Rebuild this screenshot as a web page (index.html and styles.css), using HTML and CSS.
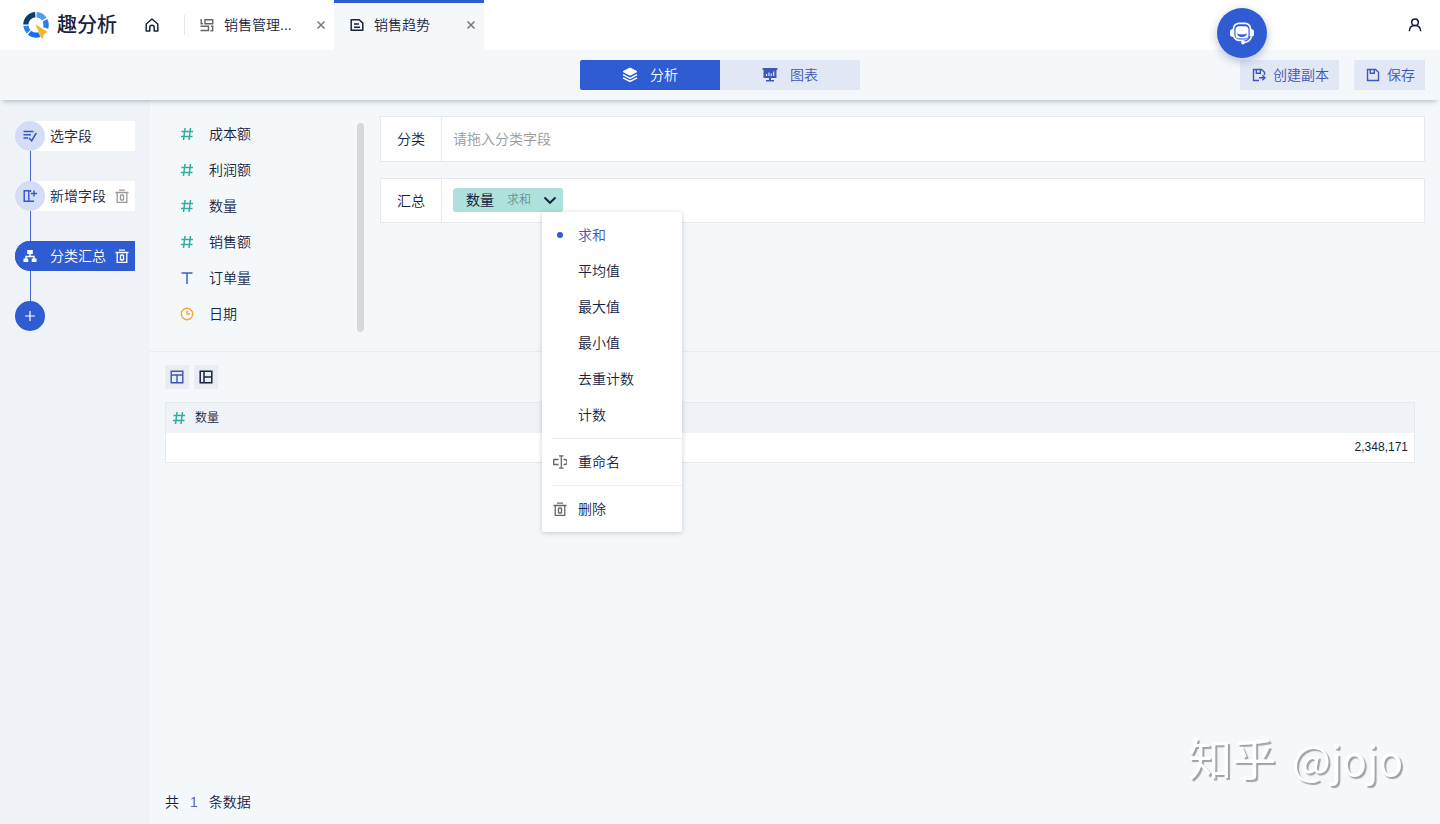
FILE: index.html
```html
<!DOCTYPE html>
<html lang="zh-CN">
<head>
<meta charset="utf-8">
<meta name="viewport" content="width=device-width, initial-scale=1">
<title>趣分析 - 销售趋势</title>
<link rel="stylesheet" href="styles.css">
</head>
<body>
<svg class="sprite" aria-hidden="true">
  <symbol id="i-hash" viewBox="0 0 14 14"><path d="M5 1 3.500 13M10.500 1 9 13M1.500 4.500h11.500M1 9.500h11.500" fill="none" stroke="currentColor" stroke-width="1.500"/></symbol>
  <symbol id="i-trash" viewBox="0 0 14 14"><path d="M.5 3.500h13M4 1.200h6M2.200 3.500v9.800h9.600V3.500M5.500 6v5M8.500 6v5M5.500 6h3M5.500 11h3" fill="none" stroke="currentColor" stroke-width="1.300"/></symbol>
  <symbol id="i-close" viewBox="0 0 10 10"><path d="m1.500 1.500 7 7M8.500 1.500l-7 7" fill="none" stroke="currentColor" stroke-width="1.500"/></symbol>
</svg>

<header class="header">
  <a class="brand" href="#">
    <svg class="brand-logo" viewBox="0 0 28 28" aria-hidden="true">
      <g fill="none" stroke-width="5.200">
        <path d="M3.800 13.500A10.200 10.200 0 0 1 13.300 3.600" stroke="#0c3f66"/>
        <path d="M14.600 3.600A10.200 10.200 0 0 1 22.400 8" stroke="#4f9bf5"/>
        <path d="M23 9.200A10.200 10.200 0 0 1 23.700 17" stroke="#2d7df0"/>
        <path d="M3.900 14.800A10.200 10.200 0 0 0 6.700 20.800" stroke="#2f80ee"/>
        <path d="M7.500 21.700A10.200 10.200 0 0 0 18 23.300" stroke="#146ff5"/>
      </g>
      <path d="m13 12.800 13 8.200-3.800 2.200-1.200 4.600h-1.500z" fill="#fbb321" stroke="#fff" stroke-width=".5"/>
    </svg>
    <span class="brand-name">趣分析</span>
  </a>
  <a class="home" href="#" aria-label="首页">
    <svg class="icon" viewBox="0 0 14 14" aria-hidden="true"><path d="M1.200 6 7 1l5.800 5v7H9.200V9.500a2.200 2.200 0 0 0-4.400 0V13H1.200z" fill="none" stroke="currentColor" stroke-width="1.500" stroke-linejoin="round"/></svg>
  </a>
  <nav class="tabs" aria-label="页签">
    <div class="tab">
      <a class="tab-link" href="#">
        <svg class="icon icon-muted" viewBox="0 0 14 14" aria-hidden="true"><path d="M1.200 1v4.700M.5 5.700h2.500M5 1.700h7.700v4H5zM.5 8.300h8v4.200h-8M11 8.300h1.700v5M10.500 12.700h2.200" fill="none" stroke="currentColor" stroke-width="1.400"/></svg>
        <span class="tab-text">销售管理...</span>
      </a>
      <button class="tab-close" type="button" aria-label="关闭销售管理"><svg viewBox="0 0 10 10"><use href="#i-close"/></svg></button>
    </div>
    <div class="tab tab-active">
      <a class="tab-link" href="#" aria-current="page">
        <svg class="icon" viewBox="0 0 14 14" aria-hidden="true"><path d="M1.200 1.700h8l3.600 3.400v7.200H1.200zM4 6h5M4 9.300h6" fill="none" stroke="currentColor" stroke-width="1.500" stroke-linejoin="round"/></svg>
        <span class="tab-text">销售趋势</span>
      </a>
      <button class="tab-close" type="button" aria-label="关闭销售趋势"><svg viewBox="0 0 10 10"><use href="#i-close"/></svg></button>
    </div>
  </nav>
  <button class="user" type="button" aria-label="用户">
    <svg class="icon" viewBox="0 0 14 14" aria-hidden="true"><g fill="none" stroke="currentColor" stroke-width="1.500"><circle cx="7" cy="4.300" r="3.300"/><path d="M1.300 13.300C1.500 9.500 4 7.600 7 7.600s5.500 1.900 5.700 5.700"/></g></svg>
  </button>
</header>

<div class="toolbar">
  <div class="modes">
    <button class="mode mode-active" type="button">
      <svg class="mode-icon" viewBox="0 0 16 16" aria-hidden="true"><path d="m8 1 7 3.600L8 8.200 1 4.600z" fill="currentColor" stroke="currentColor" stroke-linejoin="round"/><path d="m1 7.700 7 3.600 7-3.600M1 10.800l7 3.700 7-3.700" fill="none" stroke="currentColor" stroke-width="1.500"/></svg>
      <span>分析</span>
    </button>
    <button class="mode" type="button">
      <svg class="mode-icon" viewBox="0 0 16 16" aria-hidden="true"><path d="M.5 1h15v1.800h-1V11H9v2h3v1.500H4V13h3v-2H1.500V2.800h-1z" fill="currentColor"/><path d="M4.500 9V7M7 9V5.500M9.300 9V6.500M11.700 9V4.500" stroke="#e2e7f5" stroke-width="1.200"/></svg>
      <span>图表</span>
    </button>
  </div>
  <div class="actions">
    <button class="action" type="button">
      <svg class="icon" viewBox="0 0 14 14" aria-hidden="true"><path d="M7 12.500H1.500v-11h8l3 2.800V7M4.300 1.500v3.700h4V1.500M7 9.800h5.500M10.300 7.300l2.700 2.500-2.700 2.500" fill="none" stroke="currentColor" stroke-width="1.400"/></svg>
      <span>创建副本</span>
    </button>
    <button class="action" type="button">
      <svg class="icon" viewBox="0 0 14 14" aria-hidden="true"><path d="M1.500 1.500h8l3 2.800v8.200h-11zM4.300 1.500v3.700h4V1.500" fill="none" stroke="currentColor" stroke-width="1.400"/></svg>
      <span>保存</span>
    </button>
  </div>
</div>

<div class="workspace">
  <aside class="sidebar">
    <ol class="steps">
      <li class="step">
        <button class="step-main" type="button">
          <span class="step-badge"><svg class="icon" viewBox="0 0 14 14" aria-hidden="true"><path d="M.5 2.500h10M.5 5.700h7.500M.5 9h4.500M6 9l2.700 2.700L13.300 4" fill="none" stroke="currentColor" stroke-width="1.500"/></svg></span>
          <span>选字段</span>
        </button>
      </li>
      <li class="step">
        <button class="step-main" type="button">
          <span class="step-badge"><svg class="icon" viewBox="0 0 14 14" aria-hidden="true"><path d="M1.200 1.700h4.600v10.600H1.200zM5.800 12.300h5.200M7.500 1v2M8 4.500h6M11 1.500v6" fill="none" stroke="currentColor" stroke-width="1.400"/></svg></span>
          <span>新增字段</span>
        </button>
        <button class="step-delete" type="button" aria-label="删除新增字段"><svg class="icon" viewBox="0 0 14 14"><use href="#i-trash"/></svg></button>
      </li>
      <li class="step step-active">
        <button class="step-main" type="button" aria-current="step">
          <span class="step-badge"><svg class="icon" viewBox="0 0 14 14" aria-hidden="true"><path d="M4.200 1h5.600v4H4.200zM.5 9.500h4.800V13H.5zM8.700 9.500h4.800V13H8.700z" fill="currentColor"/><path d="M7 5v2.500M3 10V7.500h8V10" fill="none" stroke="currentColor" stroke-width="1.400"/></svg></span>
          <span>分类汇总</span>
        </button>
        <button class="step-delete" type="button" aria-label="删除分类汇总"><svg class="icon" viewBox="0 0 14 14"><use href="#i-trash"/></svg></button>
      </li>
    </ol>
    <button class="step-add" type="button" aria-label="添加步骤"><svg viewBox="0 0 10 10" aria-hidden="true"><path d="M5 0v10M0 5h10" stroke="currentColor" stroke-width="1.200"/></svg></button>
  </aside>

  <main class="main">
    <section class="config">
      <ul class="fields">
        <li class="field"><svg class="icon icon-number" viewBox="0 0 14 14"><use href="#i-hash"/></svg>成本额</li>
        <li class="field"><svg class="icon icon-number" viewBox="0 0 14 14"><use href="#i-hash"/></svg>利润额</li>
        <li class="field"><svg class="icon icon-number" viewBox="0 0 14 14"><use href="#i-hash"/></svg>数量</li>
        <li class="field"><svg class="icon icon-number" viewBox="0 0 14 14"><use href="#i-hash"/></svg>销售额</li>
        <li class="field"><svg class="icon icon-text" viewBox="0 0 14 14"><path d="M1.500 2h11M7 2v11" fill="none" stroke="currentColor" stroke-width="1.500"/></svg>订单量</li>
        <li class="field"><svg class="icon icon-date" viewBox="0 0 14 14"><g fill="none" stroke="currentColor" stroke-width="1.400"><circle cx="7" cy="7" r="5.700"/><path d="M7 3.500V7h3"/></g></svg>日期</li>
      </ul>
      <div class="scrollbar"></div>
      <div class="zones">
        <div class="zone">
          <div class="zone-label">分类</div>
          <div class="zone-body"><span class="zone-hint">请拖入分类字段</span></div>
        </div>
        <div class="zone">
          <div class="zone-label">汇总</div>
          <div class="zone-body">
            <div class="chip-wrap">
              <button class="chip" type="button" aria-haspopup="menu" aria-expanded="true">
                <span class="chip-name">数量</span>
                <span class="chip-mode">求和</span>
                <svg class="chip-arrow" viewBox="0 0 14 14" aria-hidden="true"><path d="m1.500 4.500 5.500 5.300 5.500-5.300" fill="none" stroke="currentColor" stroke-width="2"/></svg>
              </button>
              <div class="menu" role="menu">
                <button class="menu-item menu-item-selected" type="button" role="menuitem"><span class="menu-mark"><span class="dot"></span></span>求和</button>
                <button class="menu-item" type="button" role="menuitem"><span class="menu-mark"></span>平均值</button>
                <button class="menu-item" type="button" role="menuitem"><span class="menu-mark"></span>最大值</button>
                <button class="menu-item" type="button" role="menuitem"><span class="menu-mark"></span>最小值</button>
                <button class="menu-item" type="button" role="menuitem"><span class="menu-mark"></span>去重计数</button>
                <button class="menu-item" type="button" role="menuitem"><span class="menu-mark"></span>计数</button>
                <hr class="menu-divider">
                <button class="menu-item" type="button" role="menuitem"><span class="menu-mark"><svg class="icon" viewBox="0 0 14 14" aria-hidden="true"><path d="M5.500 4.500H.7v5h4.800M8.300.800v12.400M6 .8h4.500M6 13.200h4.500M10.500 4.500h1.200a2.500 2.500 0 0 1 0 5h-1.200" fill="none" stroke="currentColor" stroke-width="1.300"/></svg></span>重命名</button>
                <hr class="menu-divider">
                <button class="menu-item" type="button" role="menuitem"><span class="menu-mark"><svg class="icon" viewBox="0 0 14 14"><use href="#i-trash"/></svg></span>删除</button>
              </div>
            </div>
          </div>
        </div>
      </div>
    </section>

    <section class="result">
      <div class="views">
        <button class="view view-active" type="button" aria-label="列表视图"><svg class="icon" viewBox="0 0 14 14"><path d="M1.200 1.200h11.600v11.600H1.200zM1.200 5h11.600M7 5v7.800" fill="none" stroke="currentColor" stroke-width="1.400"/></svg></button>
        <button class="view" type="button" aria-label="分栏视图"><svg class="icon" viewBox="0 0 14 14"><path d="M1.200 1.200h11.600v11.600H1.200zM5 1.200v11.600M5 7h7.800" fill="none" stroke="currentColor" stroke-width="1.500"/></svg></button>
      </div>
      <table class="data">
        <thead><tr><th scope="col"><span class="data-head"><svg class="icon icon-number" viewBox="0 0 14 14"><use href="#i-hash"/></svg>数量</span></th></tr></thead>
        <tbody><tr><td>2,348,171</td></tr></tbody>
      </table>
      <footer class="total"><span>共</span><span class="total-count">1</span><span>条数据</span></footer>
    </section>
  </main>
</div>

<button class="support" type="button" aria-label="在线客服">
  <svg viewBox="0 0 26 26" aria-hidden="true">
    <rect x="4.500" y="3.300" width="17" height="17" rx="5.500" fill="none" stroke="#fff" stroke-width="1.700"/>
    <rect x="6.500" y="6.300" width="13" height="12.200" rx="3.500" fill="#fff"/>
    <path d="M8 13.500c3 1.200 7 1.200 10 0-.5 2.300-2.300 3.500-5 3.500s-4.500-1.200-5-3.500z" fill="#2f5bd3"/>
    <path d="M4 9v8c-1.800 0-3-1-3-2.500v-3C1 10 2.200 9 4 9zM22 9v8c1.800 0 3-1 3-2.500v-3C25 10 23.800 9 22 9z" fill="#fff"/>
    <path d="M22 16.500c-.8 3.500-3.300 5.700-7.500 6" fill="none" stroke="#2f5bd3" stroke-width="3.600"/>
    <path d="M22.500 16.500c-.8 3.500-3.800 5.700-8 6" fill="none" stroke="#fff" stroke-width="1.500"/>
    <circle cx="14" cy="22.500" r="1.900" fill="#fff"/>
  </svg>
</button>
<div class="watermark"><span>知乎</span><span class="watermark-name">@jojo</span></div>
</body>
</html>
```
FILE: styles.css
```css
* {
  box-sizing: border-box;
}

:root {
  --blue: #2f5bd3;
  --ink: #17233f;
  --line: #e6e9ed;
  --page: #f5f8fb;
}

body {
  margin: 0;
  min-height: 100vh;
  display: flex;
  flex-direction: column;
  background: var(--page);
  color: var(--ink);
  font: 350 14px/20px "Liberation Sans", "Noto Sans CJK SC", sans-serif;
}

button {
  margin: 0;
  padding: 0;
  border: 0;
  background: none;
  color: inherit;
  font: inherit;
  cursor: pointer;
}

a {
  color: inherit;
  text-decoration: none;
}

ul,
ol {
  margin: 0;
  padding: 0;
  list-style: none;
}

.sprite {
  display: none;
}

.icon {
  display: block;
  flex: none;
  width: 14px;
  height: 14px;
}

.icon-muted {
  color: #666;
}

.icon-number {
  color: #2fae9b;
}

.icon-text {
  color: #3f5fc6;
}

.icon-date {
  color: #f5a73b;
}

/* Header */

.header {
  display: flex;
  align-items: center;
  height: 50px;
  padding-left: 22px;
  background: #fff;
}

.brand {
  display: flex;
  align-items: center;
  gap: 7px;
}

.brand-logo {
  width: 28px;
  height: 28px;
}

.brand-name {
  font-size: 20px;
  font-weight: 500;
  line-height: 28px;
}

.home {
  margin: 0 25px 0 28px;
}

.tabs {
  display: flex;
  align-self: stretch;
  align-items: center;
}

.tab {
  display: flex;
  align-items: center;
  justify-content: space-between;
  width: 150px;
  height: 50px;
  padding: 0 8px 0 16px;
}

.tab:first-child {
  background: linear-gradient(#e3e6ec, #e3e6ec) no-repeat left center / 1px 20px;
}

.tab-active {
  border-top: 3px solid var(--blue);
  border-bottom: 3px solid transparent;
  background: var(--page);
}

.tab-link {
  display: flex;
  align-items: center;
  gap: 10px;
}

.tab-text {
  white-space: nowrap;
}

.tab-close {
  width: 10px;
  height: 10px;
  color: #777;
}

.tab-close svg {
  display: block;
}

.user {
  margin-left: auto;
  padding: 0 18px;
  color: #111c3d;
}

/* Toolbar */

.toolbar {
  position: relative;
  display: grid;
  grid-template-columns: 1fr auto 1fr;
  align-items: center;
  height: 50px;
  padding: 0 15px;
  background: var(--page);
  box-shadow: 0 4px 5px -3px rgba(60, 75, 100, 0.4);
}

.modes {
  grid-column: 2;
  display: flex;
  overflow: hidden;
  border-radius: 2px;
}

.mode {
  display: flex;
  align-items: center;
  justify-content: center;
  gap: 12px;
  width: 140px;
  height: 30px;
  background: #e2e7f5;
  color: #3f57b5;
}

.mode-icon {
  width: 16px;
  height: 16px;
}

.mode-active {
  background: var(--blue);
  color: #fff;
}

.actions {
  display: flex;
  justify-content: flex-end;
  gap: 15px;
}

.action {
  display: flex;
  align-items: center;
  gap: 7px;
  height: 30px;
  padding: 0 10px 0 12px;
  background: #e2e7f5;
  color: #3f57b5;
}

/* Steps */

.workspace {
  flex: 1;
  display: flex;
}

.sidebar {
  width: 150px;
  padding: 21px 15px;
  background: #eff3f7;
}

.step {
  position: relative;
  display: flex;
  align-items: center;
  height: 30px;
  margin-bottom: 30px;
  padding-right: 6px;
  border-radius: 15px 0 0 15px;
  background: #fff;
}

.step::after {
  content: "";
  position: absolute;
  top: 100%;
  left: 15px;
  width: 1px;
  height: 30px;
  background: #4468d2;
}

.step-main {
  flex: 1;
  display: flex;
  align-items: center;
  gap: 5px;
  white-space: nowrap;
}

.step-badge {
  display: grid;
  place-items: center;
  width: 30px;
  height: 30px;
  border-radius: 50%;
  background: #d3ddf6;
  color: #3557c4;
}

.step-delete {
  color: #999;
}

.step-active,
.step-active .step-badge {
  background: var(--blue);
  color: #fff;
}

.step-active .step-delete {
  color: #fff;
}

.step-add {
  display: grid;
  place-items: center;
  width: 30px;
  height: 30px;
  border-radius: 50%;
  background: var(--blue);
  color: #fff;
}

.step-add svg {
  width: 10px;
  height: 10px;
}

/* Field list and drop zones */

.main {
  flex: 1;
  min-width: 0;
  display: flex;
  flex-direction: column;
}

.config {
  display: flex;
  padding: 16px 15px 19px 30px;
  border-bottom: 1px solid #e9edf1;
}

.fields {
  width: 177px;
}

.field {
  display: flex;
  align-items: center;
  gap: 15px;
  height: 36px;
}

.scrollbar {
  width: 7px;
  margin: 7px 16px 0 0;
  border-radius: 4px;
  background: #d6d9dc;
}

.zones {
  flex: 1;
  display: flex;
  flex-direction: column;
  gap: 16px;
}

.zone {
  display: flex;
  height: 46px;
  border: 1px solid var(--line);
  background: #fff;
}

.zone + .zone {
  height: 45px;
}

.zone-label {
  display: grid;
  place-items: center;
  width: 61px;
  border-right: 1px solid var(--line);
}

.zone-body {
  flex: 1;
  display: flex;
  align-items: flex-start;
  padding: 9px 11px;
}

.zone-hint {
  line-height: 26px;
  color: #999;
}

.chip-wrap {
  position: relative;
}

.chip {
  display: flex;
  align-items: center;
  width: 110px;
  height: 24px;
  padding: 0 6px 0 13px;
  border-radius: 4px 2px 2px 2px;
  background: #aee1db;
}

.chip-name {
  font-weight: 400;
}

.chip-mode {
  margin-left: 13px;
  color: #6f8f90;
  font-size: 12px;
}

.chip-arrow {
  width: 14px;
  height: 14px;
  margin-left: auto;
}

.menu {
  position: absolute;
  z-index: 2;
  top: 100%;
  left: 89px;
  width: 140px;
  padding: 5px 0;
  border-radius: 2px;
  background: #fff;
  box-shadow: 0 1px 5px rgba(40, 50, 70, 0.24);
}

.menu-item {
  display: flex;
  align-items: center;
  gap: 11px;
  width: 100%;
  height: 36px;
  padding: 0 11px;
  text-align: left;
}

.menu-item-selected {
  color: #3f57b5;
}

.menu-mark {
  display: grid;
  place-items: center;
  width: 14px;
  color: #666;
}

.dot {
  width: 6px;
  height: 6px;
  border-radius: 50%;
  background: var(--blue);
}

.menu-divider {
  height: 1px;
  margin: 5px 0 5px 10px;
  border: 0;
  background: #eceef1;
}

/* Result table */

.result {
  flex: 1;
  display: flex;
  flex-direction: column;
  padding: 13px 25px 12px 15px;
}

.views {
  display: flex;
  gap: 5px;
  margin-bottom: 13px;
}

.view {
  display: grid;
  place-items: center;
  width: 24px;
  height: 24px;
  background: #e9ecf0;
}

.view-active {
  color: #3f57b5;
}

.data {
  width: 100%;
  border-collapse: collapse;
  border: 1px solid var(--line);
  font-size: 12px;
}

.data th {
  height: 30px;
  padding: 0 6px;
  background: #eff2f6;
  font-weight: 350;
}

.data-head {
  display: flex;
  align-items: center;
  gap: 9px;
}

.data td {
  height: 30px;
  padding: 0 6px;
  background: #fff;
  text-align: right;
}

.total {
  display: flex;
  gap: 11px;
  margin-top: auto;
}

.total-count {
  color: #5b62b8;
}

/* Floating layers */

.support {
  position: absolute;
  z-index: 3;
  top: 8px;
  right: 173px;
  display: grid;
  place-items: center;
  width: 50px;
  height: 50px;
  border-radius: 50%;
  background: var(--blue);
  box-shadow: 0 3px 10px rgba(30, 50, 110, 0.3);
}

.support svg {
  width: 26px;
  height: 26px;
}

.watermark {
  position: fixed;
  right: 37px;
  bottom: 36px;
  display: flex;
  align-items: baseline;
  gap: 16px;
  color: #fff;
  font: 400 44px/60px "Noto Sans CJK SC", sans-serif;
  text-shadow: 2px 2px 1px #a0a2a4;
  pointer-events: none;
}

.watermark-name {
  font-size: 41px;
}
```
